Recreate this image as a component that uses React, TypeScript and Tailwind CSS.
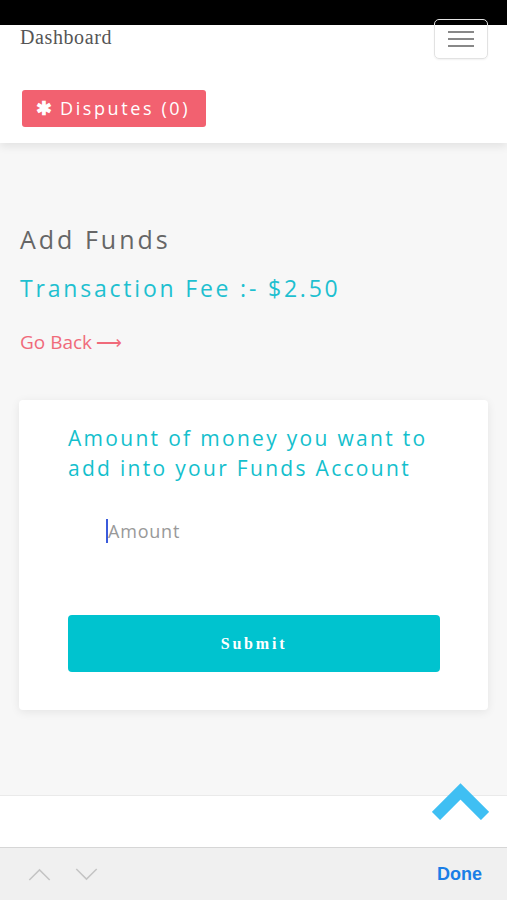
import React from 'react';

const sans = { fontFamily: '"Open Sans", "Noto Sans", sans-serif' };

const ChevronUp: React.FC<{ className?: string }> = ({ className }) => (
  <svg viewBox="0 0 24 14" className={className} fill="none" stroke="currentColor" strokeWidth={1.6}>
    <path d="M1 13 L12 2 L23 13" />
  </svg>
);

const ChevronDown: React.FC<{ className?: string }> = ({ className }) => (
  <svg viewBox="0 0 24 14" className={className} fill="none" stroke="currentColor" strokeWidth={1.6}>
    <path d="M1 1 L12 12 L23 1" />
  </svg>
);

const App: React.FC = () => {
  return (
    <div className="w-[507px] h-[900px] flex flex-col bg-[#f7f7f7] overflow-hidden font-['Open_Sans',sans-serif]">
      <div className="h-[25px] bg-black shrink-0" />

      {/* header */}
      <div className="bg-white h-[118px] shrink-0 shadow-[0_4px_8px_rgba(0,0,0,0.08)] relative z-10">
        <div className="flex justify-between items-start">
          <div className="pl-5 -mt-[3px] text-[20px] tracking-[0.6px] text-[#555] font-['Liberation_Serif',serif]">Dashboard</div>
          <div className="mr-[19px] -mt-[6px] w-[54px] h-[40px] border border-[#e2e2e2] rounded-[5px] flex flex-col items-center justify-center gap-[5px] shadow-[0_1px_2px_rgba(0,0,0,0.06)]">
            <span className="block w-[26px] h-[2px] bg-[#888]" />
            <span className="block w-[26px] h-[2px] bg-[#888]" />
            <span className="block w-[26px] h-[2px] bg-[#888]" />
          </div>
        </div>
        <div className="pl-[22px] mt-[31px]">
          <button className="h-[37px] w-[184px] pl-[14px] bg-[#f26170] rounded-[3px] text-white text-[18px] tracking-[2.6px] flex items-center gap-[8px]" style={sans}>
            <span className="text-[19px] tracking-normal font-bold">✱</span>
            <span>Disputes (0)</span>
          </button>
        </div>
      </div>

      {/* content */}
      <div className="flex-1 px-[19px] pt-[80px]">
        <h1 className="text-[25px] text-[#666] tracking-[3px] leading-[32px] pl-[1px]">Add Funds</h1>
        <h2 className="mt-[18px] text-[23px] font-medium text-[#1ec0d0] tracking-[2.8px] leading-[30px] pl-[1px]">Transaction Fee :- $2.50</h2>
        <div className="mt-[26px] text-[19px] text-[#f06a7a] leading-[26px] flex items-center gap-[4px] pl-[1px]">
          Go Back <span className="text-[18px]">⟶</span>
        </div>

        <div className="mt-[45px] bg-white rounded-[4px] shadow-[0_2px_10px_rgba(0,0,0,0.08)] h-[310px] pl-[49px] pr-[48px] pt-[23px]">
          <p className="text-[21px] font-medium leading-[30px] text-[#14bfcd] tracking-[2.3px]">
            Amount of money you want to add into your Funds Account
          </p>
          <div className="mt-[33px] pl-[38px] h-[30px] flex items-center">
            <span className="w-[2px] h-[24px] bg-[#3b5bdb]" />
            <span className="text-[18px] text-[#999] tracking-[0.8px]">Amount</span>
          </div>
          <button className="mt-[69px] w-full h-[57px] bg-[#00c3cf] rounded-[4px] text-white text-[16px] font-bold tracking-[2.8px] font-['Liberation_Serif',serif]">
            Submit
          </button>
        </div>
      </div>

      {/* bottom white strip */}
      <div className="h-[52px] bg-white border-t border-[#eaeaea] shrink-0 relative">
        <svg viewBox="0 0 57 37" className="absolute left-[432px] -top-[13px] w-[57px] h-[37px]">
          <path d="M4 33 L28.5 8.5 L53 33" fill="none" stroke="#3fbff3" strokeWidth={11.5} strokeLinejoin="miter" strokeLinecap="butt" />
        </svg>
      </div>

      {/* keyboard toolbar */}
      <div className="h-[53px] bg-[#f0f0f0] border-t border-[#d6d6d6] shrink-0 flex items-center px-[28px]">
        <ChevronUp className="w-[23px] h-[13px] text-[#c4c4c4]" />
        <ChevronDown className="w-[23px] h-[13px] text-[#c4c4c4] ml-[24px]" />
        <div className="ml-auto mr-[-3px] text-[18px] font-semibold text-[#1a7ee6] font-['Liberation_Sans',sans-serif]">Done</div>
      </div>
    </div>
  );
};

export default App;
